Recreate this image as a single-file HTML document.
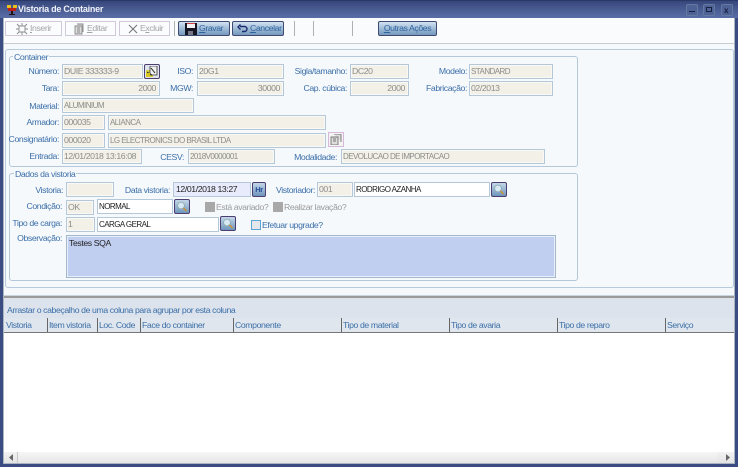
<!DOCTYPE html>
<html><head><meta charset="utf-8"><style>
html,body{margin:0;padding:0;width:738px;height:467px;overflow:hidden;background:#fff}
#w{position:relative;width:738px;height:467px;overflow:hidden;font:8.7px "Liberation Sans",sans-serif;letter-spacing:-.4px;background:#f6f9fc;filter:blur(.35px)}
#w div,#w span.a,#w svg{position:absolute;box-sizing:border-box}
.l{color:#3c6fa8;text-align:right;white-space:nowrap;height:14px;line-height:14px}
.i{background:#f3f0e8;border:1px solid #b4c8da;color:#8c8c88;height:15px;line-height:13px;padding:0 1px;white-space:nowrap;box-shadow:inset 0 0 0 1px #f8f8f4}
.c{font-size:8px;letter-spacing:-.55px}
.r{text-align:right;padding-right:3px}
.e{background:#fff;color:#222;box-shadow:none}
.fs{border:1px solid #b4c8da;border-radius:3px;background:#f6f9fc}
.lg{color:#3c6fa8;background:#f6f9fc;padding:0 1px;height:11px;line-height:11px}
.b{height:15px;top:21px;border:1px solid #d2c8dc;background:#fbfcfd;color:#a4a4a4;line-height:13px;white-space:nowrap}
.g{border:1px solid #3e4a70;border-radius:2px;background:linear-gradient(#d3e2f0,#9bb8d4 55%,#7598bc);color:#2f64a0;line-height:13px;white-space:nowrap}
.s{width:1px;height:15px;top:21px;background:#b0b0b0}
.u{text-decoration:underline}
.h{top:318px;height:14px;line-height:14px;color:#3c6fa8;white-space:nowrap;border-left:1px solid #666;padding-left:1px}
.lp{width:16px;height:15px;border:1px solid #4a3f70;border-radius:2px;background:linear-gradient(#c4d7e8,#6f95bb)}
.wb{top:4px;width:12px;height:12px;background:#4f6296;border:1px solid #65789f;border-radius:2px}
.ck{width:10px;height:10px;background:#a8a8a8}
.d{color:#9a9a9a;white-space:nowrap;height:12px;line-height:12px}
</style></head><body><div id="w">
<!-- frame -->
<div style="left:0;top:0;width:738px;height:18px;background:linear-gradient(#34467a,#46588e 40%,#5a6ea6);border-top:1px solid #2a3868"></div>
<div style="left:0;top:18px;width:3px;height:449px;background:#3b4c82"></div>
<div style="left:3px;top:18px;width:1px;height:449px;background:#aab4c0"></div>
<div style="left:735px;top:18px;width:3px;height:449px;background:#3b4c82"></div>
<div style="left:734px;top:18px;width:1px;height:449px;background:#aab4c0"></div>
<div style="left:0;top:464px;width:738px;height:3px;background:#3b4c82"></div>
<div style="left:3px;top:463px;width:732px;height:1px;background:#aab4c0"></div>
<!-- title -->
<svg style="left:6px;top:4px" width="12" height="12" viewBox="0 0 12 12"><path d="M1 1h4v3H1zM7 1h4v3H7z" fill="#e8c020"/><path d="M2 4h8v3H2z" fill="#c02018"/><path d="M5 7h2v4H5zM3 10h6v1H3z" fill="#201010"/></svg>
<div style="left:18px;top:3px;color:#f0f2f8;font-weight:bold;font-size:9px;letter-spacing:-.25px;line-height:12px;white-space:nowrap">Vistoria de Container</div>
<div class="wb" style="left:686px"></div><div style="left:689px;top:11px;width:6px;height:1px;background:#162040"></div>
<div class="wb" style="left:703px"></div><div style="left:706px;top:7px;width:6px;height:5px;border:1px solid #162040"></div>
<div class="wb" style="left:721px"></div><div style="left:724px;top:6px;color:#162040;font-size:8px;font-weight:bold;line-height:9px">x</div>
<!-- toolbar -->
<div style="left:4px;top:18px;width:730px;height:26px;background:#f9fbfd;border-bottom:1px solid #c8ccd0"></div>
<div class="b" style="left:5px;width:57px"><svg style="left:10px;top:1px" width="12" height="12" viewBox="0 0 12 12" fill="none" stroke="#8a8a8a" stroke-width=".9"><path d="M3 3h6v6H3zM3 3L1 1M9 3l2-2M3 9l-2 2M9 9l2 2M6 0v3M0 6h3M9 6h3M6 9v3"/></svg><span class="a" style="left:24px;top:0"><span class="u">I</span>nserir</span></div>
<div class="b" style="left:65px;width:51px"><svg style="left:7px;top:1px" width="12" height="12" viewBox="0 0 12 12" fill="#ddd" stroke="#888" stroke-width=".9"><path d="M2 3h7v8H2zM4 1h6v8M4 5h3M4 7h3M4 9h3"/></svg><span class="a" style="left:21px;top:0"><span class="u">E</span>ditar</span></div>
<div class="b" style="left:119px;width:51px"><svg style="left:7px;top:1px" width="12" height="12" viewBox="0 0 12 12" fill="none" stroke="#777" stroke-width="1.1"><path d="M2 2l8 8M10 2l-8 8"/></svg><span class="a" style="left:20px;top:0">E<span class="u">x</span>cluir</span></div>
<div class="s" style="left:174px"></div>
<div class="g" style="left:178px;top:21px;width:52px;height:15px"><svg style="left:6px;top:1px" width="12" height="12" viewBox="0 0 12 12"><path d="M0 0h12v12H0z" fill="#151525"/><path d="M2 0h8v5H2z" fill="#f2f2f2"/><path d="M2 0h8v1H2z" fill="#d04040"/><path d="M3 8h5v4H3z" fill="#778"/></svg><span class="a" style="left:20px;top:0"><span class="u">G</span>ravar</span></div>
<div class="g" style="left:232px;top:21px;width:52px;height:15px"><svg style="left:4px;top:2px" width="11" height="10" viewBox="0 0 11 10" fill="none" stroke="#1c2c70" stroke-width="1.4"><path d="M3 2.500h4.500a2 2 0 0 1 0 5H5M3.500 0.500L1 3l2.500 2.500"/></svg><span class="a" style="left:17px;top:0"><span class="u">C</span>ancelar</span></div>
<div class="s" style="left:294px"></div><div class="s" style="left:313px"></div><div class="s" style="left:352px"></div>
<div class="g" style="left:378px;top:21px;width:59px;height:15px;text-align:center"><span class="u">O</span>utras Ações</div>
<!-- panel -->
<div style="left:5px;top:49px;width:729px;height:239px;border:1px solid #b8cbdc;border-radius:3px;background:#f6f9fc"></div>
<div class="fs" style="left:9px;top:56px;width:569px;height:111px"></div>
<div class="lg" style="left:13px;top:52px">Container</div>
<div class="l" style="right:679px;top:64px">Número:</div><div class="i" style="left:62px;top:64px;width:81px">DUIE 333333-9</div>
<div style="left:144px;top:64px;width:16px;height:15px;border:1px solid #4a3f70;border-radius:2px;background:#dfe6ee"></div>
<svg style="left:146px;top:66px" width="12" height="11" viewBox="0 0 12 11"><path d="M0 4h7v7H0z" fill="#d8d040"/><path d="M4 0h7v9H4z" fill="#f0f0f0" stroke="#333" stroke-width=".8"/><path d="M1 6l5 3M5 2l4 5" stroke="#222" fill="none"/><path d="M0 7h4v4H0z" fill="#d8c820"/></svg>
<div class="l" style="right:545px;top:64px">ISO:</div><div class="i" style="left:197px;top:64px;width:87px">20G1</div>
<div class="l" style="right:391px;top:64px">Sigla/tamanho:</div><div class="i" style="left:350px;top:64px;width:59px">DC20</div>
<div class="l" style="right:271px;top:64px">Modelo:</div><div class="i c" style="left:469px;top:64px;width:84px">STANDARD</div>

<div class="l" style="right:679px;top:81px">Tara:</div><div class="i r" style="left:62px;top:81px;width:98px">2000</div>
<div class="l" style="right:545px;top:81px">MGW:</div><div class="i r" style="left:197px;top:81px;width:87px">30000</div>
<div class="l" style="right:391px;top:81px">Cap. cúbica:</div><div class="i r" style="left:350px;top:81px;width:59px">2000</div>
<div class="l" style="right:271px;top:81px">Fabricação:</div><div class="i" style="left:469px;top:81px;width:84px">02/2013</div>

<div class="l" style="right:679px;top:99px">Material:</div><div class="i c" style="left:62px;top:98px;width:132px">ALUMINIUM</div>
<div class="l" style="right:679px;top:115px">Armador:</div><div class="i" style="left:62px;top:115px;width:43px">000035</div><div class="i c" style="left:108px;top:115px;width:218px">ALIANCA</div>
<div class="l" style="right:679px;top:132px">Consignatário:</div><div class="i" style="left:62px;top:133px;width:43px">000020</div><div class="i c" style="left:108px;top:133px;width:218px">LG ELECTRONICS DO BRASIL LTDA</div>
<div style="left:328px;top:132px;width:16px;height:15px;border:1px solid #d8b8d8;background:#f4f4f4"></div>
<svg style="left:330px;top:134px" width="12" height="11" viewBox="0 0 12 11" fill="#ddd" stroke="#777" stroke-width=".9"><path d="M1 3h7v8H1zM4 0h7v8M3 5h3M3 7h3"/></svg>
<div class="l" style="right:679px;top:149px">Entrada:</div><div class="i" style="left:62px;top:149px;width:80px">12/01/2018 13:16:08</div>
<div class="l" style="right:554px;top:150px">CESV:</div><div class="i c" style="left:188px;top:149px;width:87px">2018V0000001</div>
<div class="l" style="right:401px;top:150px">Modalidade:</div><div class="i c" style="left:341px;top:149px;width:204px">DEVOLUCAO DE IMPORTACAO</div>

<div class="fs" style="left:9px;top:173px;width:569px;height:108px"></div>
<div class="lg" style="left:14px;top:169px">Dados da vistoria</div>
<div class="l" style="right:675px;top:183px">Vistoria:</div><div class="i" style="left:66px;top:182px;width:48px"></div>
<div class="l" style="right:568px;top:183px">Data vistoria:</div><div class="i e" style="left:173px;top:182px;width:78px;background:#e8ebfb;padding-left:2px">12/01/2018 13:27</div>
<div class="lp" style="left:252px;top:182px;width:14px;color:#2a4f9a;font-weight:bold;font-size:7.5px;line-height:13px;text-align:center">Hr</div>
<div class="l" style="right:423px;top:183px">Vistoriador:</div><div class="i" style="left:317px;top:182px;width:36px">001</div>
<div class="i e c" style="left:354px;top:182px;width:136px;padding-left:1px">RODRIGO AZANHA</div>
<div class="lp" style="left:491px;top:182px"></div>
<svg style="left:493px;top:184px" width="12" height="11" viewBox="0 0 12 11"><circle cx="5" cy="4.500" r="3.400" fill="#d8e8f4" stroke="#8aa" stroke-width=".8"/><path d="M7.500 7l3 3" stroke="#d09030" stroke-width="1.500"/></svg>

<div class="l" style="right:676px;top:199px">Condição:</div><div class="i" style="left:66px;top:200px;width:28px">OK</div>
<div class="i e c" style="left:97px;top:199px;width:76px;padding-left:1px">NORMAL</div>
<div class="lp" style="left:174px;top:199px"></div>
<svg style="left:176px;top:201px" width="12" height="11" viewBox="0 0 12 11"><circle cx="5" cy="4.500" r="3.400" fill="#d8e8f4" stroke="#8aa" stroke-width=".8"/><path d="M7.500 7l3 3" stroke="#d09030" stroke-width="1.500"/></svg>
<div class="ck" style="left:205px;top:202px"></div><div class="d" style="left:216px;top:201px">Está avariado?</div>
<div class="ck" style="left:273px;top:202px"></div><div class="d" style="left:284px;top:201px">Realizar lavação?</div>

<div class="l" style="right:676px;top:216px">Tipo de carga:</div><div class="i" style="left:66px;top:217px;width:29px">1</div>
<div class="i e c" style="left:97px;top:217px;width:122px;padding-left:1px">CARGA GERAL</div>
<div class="lp" style="left:220px;top:216px"></div>
<svg style="left:222px;top:218px" width="12" height="11" viewBox="0 0 12 11"><circle cx="5" cy="4.500" r="3.400" fill="#d8e8f4" stroke="#8aa" stroke-width=".8"/><path d="M7.500 7l3 3" stroke="#d09030" stroke-width="1.500"/></svg>
<div style="left:251px;top:220px;width:10px;height:10px;border:1px solid #5ea4d0;background:#e4e8ec"></div>
<div class="d" style="left:262px;top:219px;color:#3c6fa8">Efetuar upgrade?</div>

<div class="l" style="right:676px;top:231px">Observação:</div>
<div style="left:66px;top:235px;width:490px;height:43px;border:1px solid #a4b8cc;background:#c0cef0;box-shadow:inset 0 0 0 1px #e8eefa;color:#222;line-height:12px;padding:1px 2px">Testes SQA</div>

<!-- grid -->
<div style="left:4px;top:295px;width:730px;height:1px;background:#c8d4de"></div>
<div style="left:4px;top:296px;width:730px;height:2px;background:#9a9a9a"></div>
<div style="left:4px;top:298px;width:730px;height:20px;background:#dce3ec"></div>
<div style="left:7px;top:303px;color:#3c6fa8;line-height:14px;white-space:nowrap">Arrastar o cabeçalho de uma coluna para agrupar por esta coluna</div>
<div style="left:4px;top:318px;width:730px;height:14px;background:#e0e6ed"></div>
<div style="left:4px;top:332px;width:730px;height:1px;background:#777"></div>
<div style="left:4px;top:333px;width:730px;height:119px;background:#fff"></div>
<div class="h" style="left:5px;border-left:0">Vistoria</div>
<div class="h" style="left:47px">Item vistoria</div>
<div class="h" style="left:97px">Loc. Code</div>
<div class="h" style="left:140px">Face do container</div>
<div class="h" style="left:233px">Componente</div>
<div class="h" style="left:341px">Tipo de material</div>
<div class="h" style="left:449px">Tipo de avaria</div>
<div class="h" style="left:557px">Tipo de reparo</div>
<div class="h" style="left:665px">Serviço</div>
<!-- scrollbar -->
<div style="left:4px;top:452px;width:730px;height:11px;background:linear-gradient(#f2f2f2,#e4e4e4)"></div>
<div style="left:17px;top:452px;width:700px;height:11px;background:linear-gradient(#f6f6f6,#e6e6e6);border-left:1px solid #c8c8c8"></div>
<svg style="left:9px;top:454px" width="5" height="7" viewBox="0 0 5 7"><path d="M4 0v7L0 3.500z" fill="#666"/></svg>
<svg style="left:726px;top:454px" width="5" height="7" viewBox="0 0 5 7"><path d="M0 0v7l4-3.500z" fill="#666"/></svg>
</div></body></html>
